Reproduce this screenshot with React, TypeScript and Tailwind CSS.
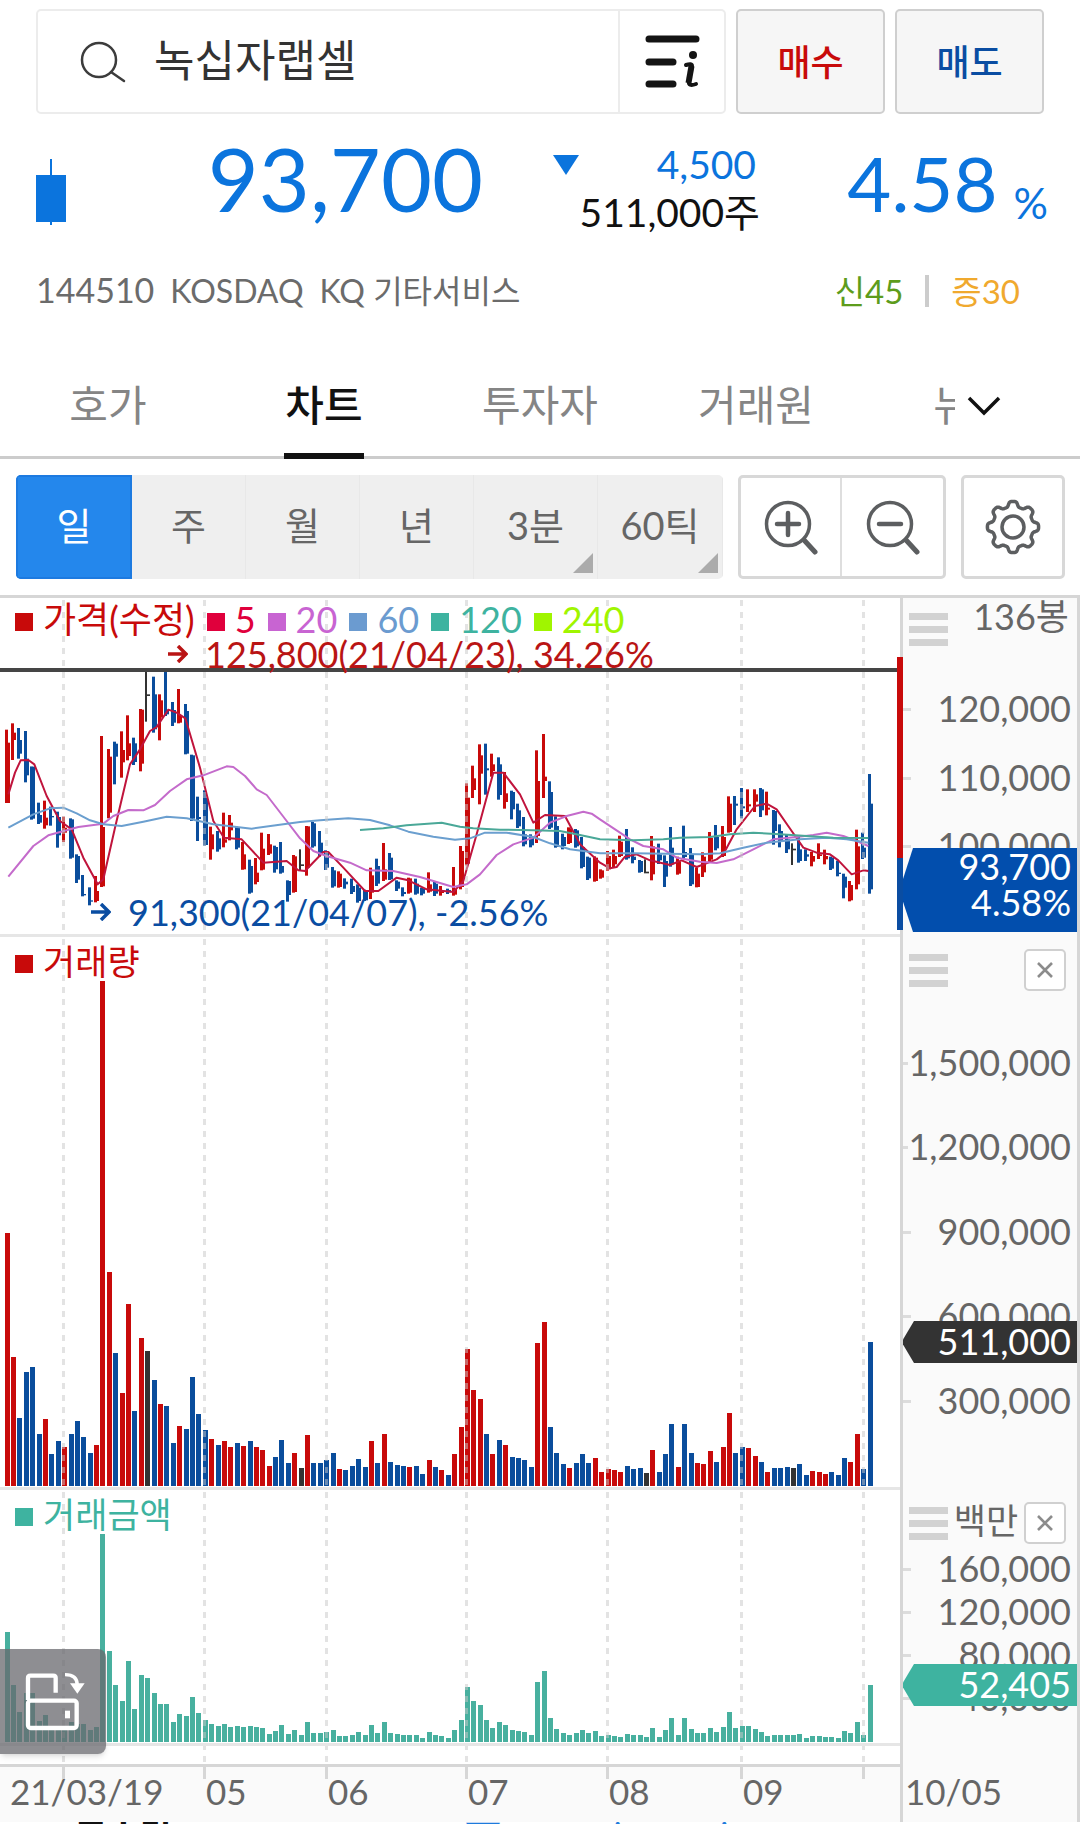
import type { ReactNode } from "react";

type Tone = "R" | "B" | "K";

const TONES: Record<Tone, string> = { R: "#c80a0a", B: "#0a4d9c", K: "#333333" };

// one letter per daily bar: up, down, flat
const BAR_TONES = (
  "RRBBBBRBBR" + "BBBBRRRBRR" + "BRKBRBBRBB" + "BBRBRRBRBR" + "RRBBBRKRBB" +
  "BBRBBBBRBR" + "BBBRBBRBRB" + "RRRRRBRBRB" + "BBBRRBBBRB" + "BBRRRRRBBB" +
  "KRBBBRBBRR" + "RBRRBBRRBR" + "BBBKBBRRRB" + "BBRRBB"
).split("") as Tone[];

const VOLUMES = [
  253, 129, 68, 114, 119, 52, 67, 32, 45, 39, 52, 65, 49, 33, 41, 505, 214, 133, 93, 182,
  75, 148, 135, 106, 82, 80, 43, 60, 57, 109, 72, 56, 47, 41, 45, 39, 43, 40, 45, 39,
  36, 20, 29, 46, 23, 33, 18, 51, 23, 23, 26, 33, 17, 16, 20, 27, 19, 45, 23, 52,
  24, 21, 20, 19, 20, 12, 26, 19, 16, 11, 32, 59, 137, 96, 87, 52, 32, 46, 41, 29,
  28, 26, 19, 143, 164, 59, 33, 22, 18, 23, 32, 23, 28, 14, 17, 16, 14, 20, 17, 18,
  13, 36, 14, 32, 62, 19, 62, 33, 23, 22, 35, 24, 39, 73, 33, 39, 38, 30, 24, 14,
  18, 18, 19, 18, 22, 11, 15, 14, 12, 14, 11, 28, 24, 52, 17, 144,
];

const AMOUNTS = [
  110, 57, 30, 49, 49, 21, 27, 13, 15, 14, 20, 18, 18, 12, 15, 208, 91, 57, 41, 81,
  33, 67, 64, 49, 38, 38, 20, 28, 26, 45, 29, 22, 18, 16, 18, 15, 16, 15, 16, 15,
  14, 8, 11, 17, 8, 12, 7, 20, 9, 9, 10, 12, 6, 6, 7, 10, 7, 17, 9, 20,
  9, 8, 7, 7, 7, 4, 10, 7, 6, 4, 12, 22, 55, 41, 37, 22, 14, 20, 17, 12,
  11, 10, 7, 60, 71, 24, 13, 9, 7, 9, 12, 9, 11, 6, 7, 6, 5, 8, 7, 7,
  5, 14, 5, 12, 24, 7, 24, 13, 9, 9, 14, 10, 15, 30, 14, 16, 16, 13, 10, 6,
  7, 7, 7, 7, 8, 4, 6, 6, 5, 5, 4, 11, 9, 20, 7, 57,
];

// high, low, body top, body bottom
const CANDLES = [
  [416, 636, 455, 636], [397, 507, 425, 447], [411, 503, 447, 488], [420, 574, 503, 553], [527, 686, 527, 683],
  [635, 699, 672, 695], [629, 713, 680, 703], [647, 704, 675, 679], [662, 770, 678, 733], [677, 753, 710, 725],
  [682, 803, 685, 800], [790, 876, 795, 866], [852, 916, 909, 913], [889, 943, 928, 932], [855, 934, 900, 930],
  [435, 888, 708, 886], [474, 682, 497, 665], [452, 580, 458, 497], [421, 560, 477, 514], [373, 508, 457, 495],
  [440, 522, 457, 513], [354, 541, 356, 518], [240, 392, 310, 315], [257, 425, 310, 415], [310, 448, 328, 380],
  [240, 375, 360, 370], [333, 405, 357, 395], [294, 397, 372, 395], [339, 490, 360, 488], [491, 690, 493, 683],
  [617, 750, 678, 684], [598, 764, 620, 762], [707, 806, 730, 775], [720, 782, 742, 775], [665, 769, 745, 755],
  [672, 748, 695, 718], [707, 775, 710, 770], [753, 836, 790, 835], [806, 908, 825, 905], [801, 880, 845, 873],
  [725, 838, 773, 836], [729, 792, 760, 788], [764, 845, 768, 835], [753, 848, 825, 845], [868, 932, 870, 912],
  [792, 905, 796, 903], [775, 840, 820, 825], [705, 854, 706, 830], [693, 770, 697, 766], [720, 797, 755, 790],
  [778, 837, 785, 830], [828, 890, 838, 886], [841, 890, 848, 888], [862, 893, 872, 880], [863, 909, 885, 903],
  [880, 935, 890, 930], [896, 930, 900, 928], [830, 924, 853, 905], [803, 885, 825, 878], [756, 870, 835, 866],
  [786, 867, 800, 865], [868, 900, 872, 893], [889, 916, 903, 909], [860, 908, 862, 905], [863, 911, 878, 908],
  [890, 913, 893, 908], [844, 905, 880, 902], [872, 915, 878, 908], [885, 914, 898, 906], [893, 909, 897, 904],
  [828, 914, 893, 911], [765, 895, 780, 888], [577, 823, 620, 818], [524, 621, 562, 597], [460, 640, 493, 548],
  [458, 611, 532, 538], [488, 557, 520, 540], [499, 626, 520, 612], [543, 653, 607, 633], [599, 685, 603, 655],
  [638, 711, 658, 706], [678, 766, 730, 760], [730, 769, 738, 763], [478, 756, 570, 735], [429, 621, 557, 570],
  [571, 714, 603, 710], [676, 770, 705, 768], [728, 775, 738, 765], [709, 759, 712, 756], [714, 770, 718, 766],
  [738, 832, 768, 828], [797, 867, 800, 862], [796, 872, 800, 870], [835, 863, 838, 860], [780, 839, 795, 835],
  [776, 829, 795, 820], [734, 798, 752, 795], [714, 806, 750, 802], [769, 817, 797, 807], [807, 845, 810, 843],
  [805, 846, 842, 847], [735, 868, 766, 850], [758, 819, 790, 808], [793, 888, 810, 857], [708, 827, 770, 820],
  [797, 851, 812, 848], [704, 803, 783, 798], [771, 885, 790, 880], [830, 889, 848, 888], [784, 858, 797, 844],
  [723, 812, 740, 806], [702, 778, 738, 772], [705, 798, 738, 795], [616, 725, 638, 723], [615, 702, 638, 644],
  [591, 682, 646, 652], [595, 663, 640, 646], [595, 663, 610, 632], [591, 678, 595, 658], [602, 673, 650, 656],
  [657, 761, 660, 720], [700, 769, 720, 750], [731, 786, 745, 775], [757, 822, 773, 778], [738, 815, 775, 810],
  [775, 810, 790, 797], [783, 826, 795, 812], [757, 804, 790, 795], [776, 820, 795, 805], [797, 837, 800, 833],
  [809, 856, 845, 849], [848, 922, 857, 890], [870, 931, 882, 928], [716, 895, 766, 880], [725, 804, 770, 800],
  [549, 908, 638, 895],
];

const AVERAGES = [
  {
    color: "#c0143c",
    points:
      "25,610 45,545 62,508 85,507 103,520 140,615 180,690 215,715 250,800 293,880 310,865 345,710 390,520 420,475 450,420 470,408 505,356 530,365 556,382 600,530 640,690 672,740 725,745 790,815 860,810 895,838 915,840 970,783 985,783 1030,830 1095,900 1135,900 1190,860 1225,868 1280,895 1360,903 1390,870 1430,730 1480,545 1510,545 1560,610 1600,695 1635,672 1695,675 1740,760 1800,815 1830,832 1850,828 1875,797 1910,790 1950,808 2010,822 2045,808 2090,828 2150,805 2170,790 2210,715 2265,645 2300,638 2330,655 2375,720 2410,770 2450,785 2490,790 2515,808 2555,850 2590,838 2605,840",
  },
  {
    color: "#c46bcb",
    points:
      "25,857 100,765 145,733 235,708 310,698 340,675 385,657 430,658 465,642 510,600 560,565 610,553 680,526 700,528 735,555 770,595 800,612 860,690 900,742 940,780 980,795 1050,815 1100,838 1180,840 1260,858 1360,888 1400,880 1440,850 1490,792 1540,760 1600,740 1650,695 1700,675 1750,662 1775,668 1800,685 1860,725 1890,745 1930,765 1990,775 2030,800 2100,812 2150,816 2200,805 2260,775 2320,745 2390,738 2440,732 2480,725 2530,735 2570,750 2605,765",
  },
  {
    color: "#6b9fcf",
    points:
      "25,710 100,670 150,652 190,650 230,667 270,688 310,700 365,705 430,692 500,677 560,682 640,700 755,713 850,700 900,693 960,688 1045,682 1110,687 1170,703 1225,722 1300,737 1365,746 1410,742 1455,725 1520,725 1600,738 1650,757 1710,775 1800,787 1900,787 2100,790 2160,787 2230,770 2300,755 2400,745 2480,740 2540,745 2605,755",
  },
  {
    color: "#4aa898",
    points:
      "1080,717 1150,712 1220,703 1325,695 1380,707 1420,712 1500,716 1600,718 1680,720 1740,732 1800,745 1900,748 1990,745 2040,740 2130,738 2190,730 2260,725 2340,730 2420,735 2500,740 2605,741",
  },
];

const MONTHS = [
  { x: 63, label: "" },
  { x: 204, label: "05" },
  { x: 326, label: "06" },
  { x: 466, label: "07" },
  { x: 607, label: "08" },
  { x: 741, label: "09" },
  { x: 863, label: "" },
];

const PLOT_WIDTH = 900;

const barX = (i: number) => Math.floor(5.1 + i * 6.393);

function MonthLines({ height }: { height: number }) {
  return (
    <>
      {MONTHS.map(({ x }) => (
        <line key={x} x1={x + 0.5} x2={x + 0.5} y1={2} y2={height} stroke="#c8c8c8" strokeOpacity="0.5" strokeWidth="3" strokeDasharray="6 6" />
      ))}
    </>
  );
}

function PriceChart() {
  return (
    <svg viewBox="0 0 900 336" preserveAspectRatio="none" className="block h-[336px] w-full">
      <g transform="translate(0 -7) scale(0.33333)">
        {CANDLES.map(([high, low, top, bottom], i) => {
          const x = barX(i) * 3;
          return (
            <g key={i} fill={TONES[BAR_TONES[i]]}>
              <rect x={x} y={high} width={BAR_TONES[i] === "K" ? 6 : 9} height={low - high} />
              <rect x={x} y={top} width="15" height={bottom - top} />
            </g>
          );
        })}
        {AVERAGES.map((line) => (
          <polyline key={line.color} points={line.points} fill="none" stroke={line.color} strokeWidth="6" strokeLinejoin="round" />
        ))}
      </g>
      <MonthLines height={336} />
      <rect x="0" y="70" width="900" height="4" fill="#454545" />
    </svg>
  );
}

function BarChart({ values, base, height, color }: { values: number[]; base: number; height: number; color?: string }) {
  return (
    <svg viewBox={`0 0 ${PLOT_WIDTH} ${height}`} preserveAspectRatio="none" className="block h-full w-full">
      {values.map((value, i) => (
        <rect key={i} x={barX(i)} y={base - value} width="5" height={value} fill={color ?? TONES[BAR_TONES[i]]} />
      ))}
      <MonthLines height={height} />
    </svg>
  );
}

function Legend({ color, children }: { color: string; children: ReactNode }) {
  return (
    <span className="flex items-center gap-[10px]" style={{ color }}>
      <span className="mt-[6px] size-[18px]" style={{ backgroundColor: color }} />
      {children}
    </span>
  );
}

function PanelHandle() {
  return (
    <button type="button" aria-label="패널 이동" className="flex h-[33px] w-[39px] flex-col justify-between">
      <span className="h-[7px] w-full bg-[#d2d2d2]" />
      <span className="h-[7px] w-full bg-[#d2d2d2]" />
      <span className="h-[7px] w-full bg-[#d2d2d2]" />
    </button>
  );
}

function CloseButton() {
  return (
    <button type="button" aria-label="닫기" className="flex size-[42px] items-center justify-center rounded-[5px] border-2 border-[#d0d0d0] bg-white">
      <svg viewBox="0 0 16 16" className="size-4" stroke="#8c8c8c" strokeWidth="2.6">
        <path d="M1 1 15 15M15 1 1 15" />
      </svg>
    </button>
  );
}

function Scale({ marks }: { marks: { y: number; label: string }[] }) {
  return (
    <>
      {marks.map(({ y, label }) => (
        <div key={label} className="absolute right-[6px] left-0 flex h-10 -translate-y-1/2 items-center justify-between" style={{ top: y }}>
          <span className="h-[3px] w-2 bg-[#dcdcdc]" />
          <span className="pb-[2px]">{label}</span>
        </div>
      ))}
    </>
  );
}

function ValueTag({ top, height, color, children }: { top: number; height: number; color: string; children: ReactNode }) {
  const double = height > 50;
  return (
    <div className="absolute right-0 left-0 text-right text-white" style={{ top, height }}>
      <svg viewBox="0 0 174 100" preserveAspectRatio="none" className="absolute inset-0 h-full w-full" fill={color}>
        <path d={double ? "M10 0H174V100H10L0 64V37Z" : "M11 0H174V100H11L0 56V44Z"} />
      </svg>
      <div className={`relative flex h-full flex-col justify-center pr-[6px] leading-9 ${double ? "pb-3" : "pb-[2px]"}`}>{children}</div>
    </div>
  );
}

const GEAR = Array.from({ length: 160 }, (_, i) => {
  const angle = (i / 160) * Math.PI * 2;
  const radius = 23 + 2.7 * Math.tanh(2 * Math.cos(angle * 8));
  return `${(28 + radius * Math.sin(angle)).toFixed(2)},${(28 - radius * Math.cos(angle)).toFixed(2)}`;
}).join(" ");

function ZoomIcon({ plus }: { plus?: boolean }) {
  return (
    <svg viewBox="0 0 56 56" className="size-14" fill="none" stroke="#5c5e60" strokeWidth="3.5" strokeLinecap="round">
      <circle cx="25" cy="25" r="21.5" />
      <path d="M41 41 52 53" strokeWidth="5" />
      <path d="M14 25H36" strokeWidth="4.5" />
      {plus && <path d="M25 14V36" strokeWidth="4.5" />}
    </svg>
  );
}

function Arrow() {
  return (
    <svg viewBox="0 0 20 18" className="h-[18px] w-5" fill="none" stroke="currentColor" strokeWidth="3.5">
      <path d="M0 9H18M10 1 18 9 10 17" />
    </svg>
  );
}

const TABS = ["호가", "차트", "투자자", "거래원", "뉴스"];

const PERIODS = [
  { label: "일", width: "w-[116px]", active: true },
  { label: "주", width: "w-[114px]" },
  { label: "월", width: "w-[114px]" },
  { label: "년", width: "w-[114px]" },
  { label: "3분", width: "w-[124px]", menu: true },
  { label: "60틱", width: "w-[125px]", menu: true },
];

function Header() {
  return (
    <header className="px-9 pt-[9px]">
      <div className="flex h-[105px] gap-[10px]">
        <form className="flex flex-1 rounded-[5px] border-2 border-[#ececec]">
          <label className="flex flex-1 items-center gap-7 pl-[42px]">
            <svg viewBox="0 0 46 42" className="h-[42px] w-[46px] shrink-0" fill="none" stroke="#3c3c3c" strokeWidth="2.5" strokeLinecap="round">
              <circle cx="19" cy="19" r="17" />
              <path d="M31 31 44 40" />
            </svg>
            <input aria-label="종목 검색" defaultValue="녹십자랩셀" className="w-full min-w-0 pb-1 text-[44px] text-[#333] outline-none" />
          </label>
          <button type="button" aria-label="종목 정보" className="flex w-[106px] items-center justify-center border-l-2 border-[#ececec]">
            <svg viewBox="0 0 56 54" className="h-[54px] w-14" fill="none" stroke="#141414" strokeWidth="7" strokeLinecap="round">
              <path d="M5 4H52M5 27H29M5 49H29" />
              <circle cx="49" cy="20" r="4" fill="#141414" stroke="none" />
              <path d="M42 30Q48 28 48 31L45 46Q44 52 52 49" strokeWidth="4" />
              <path d="M47.500 31 44.500 48" strokeWidth="6" strokeLinecap="butt" />
            </svg>
          </button>
        </form>
        <button type="button" className="w-[149px] rounded-[5px] border-2 border-[#cfcfcf] bg-[#f6f6f6] text-[36px] font-medium text-[#c80a0a]">매수</button>
        <button type="button" className="w-[149px] rounded-[5px] border-2 border-[#cfcfcf] bg-[#f6f6f6] text-[36px] font-medium text-[#0a4da2]">매도</button>
      </div>

      <div className="flex h-[106px] mt-4 items-start text-[#0b74dd]">
        <svg viewBox="0 0 30 66" className="mt-[29px] h-[66px] w-[30px]" fill="#0b74dd">
          <path d="M14 0h2v66h-2zM0 16h30v47H0z" />
        </svg>
        <div className="flex-1 text-right text-[88px] leading-[96px]">93,700</div>
        <svg viewBox="0 0 26 20" className="mt-[25px] ml-[70px] h-5 w-[26px]" fill="#0b74dd">
          <path d="M0 0H26L13 20Z" />
        </svg>
        <div className="mt-[10px] w-[181px] text-right text-[39px] leading-12">
          <div className="pr-1">4,500</div>
          <div className="-ml-10 text-[#111]">511,000주</div>
        </div>
        <div className="mt-[9px] -mr-1 flex w-[288px] items-end justify-end gap-4 leading-[88px]">
          <span className="text-[76px]">4.58</span>
          <span className="text-[43px] leading-12">%</span>
        </div>
      </div>

      <div className="flex items-center justify-between pt-[29px] text-[33px] leading-[50px]">
        <div className="flex items-baseline gap-4 text-[32px] text-[#6b6b6b]">
          <span className="text-[34px]">144510</span>
          <span>KOSDAQ</span>
          <span>KQ 기타서비스</span>
        </div>
        <div className="flex items-center gap-[22px] pr-6">
          <span className="text-[#5d9c1c]">신45</span>
          <span className="h-8 w-1 bg-[#ccc]" />
          <span className="text-[#f0a92e]">증30</span>
        </div>
      </div>
    </header>
  );
}

function Tabs() {
  return (
    <nav className="relative mt-10 grid h-[103px] grid-cols-5 border-b-[3px] border-[#ccc] text-[42px]">
      {TABS.map((tab) => (
        <a key={tab} href="#chart" className="flex justify-center">
          <span
            className={
              tab === "차트"
                ? "-mb-[3px] border-b-[6px] border-[#111] px-[1px] pt-[18px] font-medium text-[#111]"
                : "pt-[18px] text-[#858585]"
            }
          >
            {tab}
          </span>
        </a>
      ))}
      <button type="button" aria-label="더보기" className="absolute top-0 right-0 flex h-full w-[125px] items-center bg-white pl-3">
        <svg viewBox="0 0 34 20" className="h-5 w-[34px]" fill="none" stroke="#111" strokeWidth="3.5">
          <path d="M2 2 17 17 32 2" />
        </svg>
      </button>
    </nav>
  );
}

function Toolbar() {
  return (
    <div className="flex items-center justify-between py-4 pr-[15px] pl-4 text-[38px]">
      <div className="flex h-[104px] overflow-hidden rounded-[5px] bg-[#efefef]">
        {PERIODS.map(({ label, width, active, menu }) => (
          <button
            key={label}
            type="button"
            className={`relative flex items-center justify-center pb-1 ${width} ${
              active ? "border-2 border-[#1d7ae0] bg-[#2487ec] text-white" : "border-r border-[#e8e8e8] text-[#666]"
            }`}
          >
            {label}
            {menu && (
              <svg viewBox="0 0 20 20" className="absolute right-1 bottom-[6px] size-5" fill="#ababab">
                <path d="M20 0V20H0Z" />
              </svg>
            )}
          </button>
        ))}
      </div>
      <div className="flex h-[104px] rounded-[5px] border-[3px] border-[#d8d8d8]">
        <button type="button" aria-label="확대" className="flex w-[101px] items-center justify-center border-r-2 border-[#dedede]">
          <ZoomIcon plus />
        </button>
        <button type="button" aria-label="축소" className="flex w-[101px] items-center justify-center">
          <ZoomIcon />
        </button>
      </div>
      <button type="button" aria-label="설정" className="flex h-[104px] w-[104px] items-center justify-center rounded-[5px] border-[3px] border-[#d8d8d8]">
        <svg viewBox="0 0 56 56" className="size-14" fill="none" stroke="#5c5e60" strokeWidth="3.5">
          <polygon points={GEAR} strokeLinejoin="round" />
          <circle cx="28" cy="28" r="11" />
        </svg>
      </button>
    </div>
  );
}

export default function App() {
  return (
    <div className="w-full overflow-hidden bg-white font-['Lato','Noto_Sans_CJK_KR',sans-serif]">
      <Header />
      <Tabs />
      <Toolbar />

      <main id="chart" className="border-t-[3px] border-[#d6d6d6] text-[36px] leading-10 text-[#666]">
        {/* price */}
        <section className="flex h-[339px]">
          <div className="relative flex-1 border-b-[3px] border-[#e6e6e6]">
            <PriceChart />
            <div className="absolute top-0 left-[15px] flex h-[42px] items-center gap-3">
              <Legend color="#c80a0a">가격(수정)</Legend>
              <Legend color="#e0003c">5</Legend>
              <Legend color="#c864d2">20</Legend>
              <Legend color="#6b9bd0">60</Legend>
              <Legend color="#3eb3a0">120</Legend>
              <Legend color="#a0f500">240</Legend>
            </div>
            <div className="absolute top-9 left-[168px] flex items-center gap-[17px] text-[#b91414]">
              <Arrow />
              125,800(21/04/23), 34.26%
            </div>
            <div className="absolute top-[294px] left-[91px] flex items-center gap-[17px] text-[#0a4da2]">
              <Arrow />
              91,300(21/04/07), -2.56%
            </div>
          </div>
          <div className="relative w-[180px] border-r-[3px] border-l-[3px] border-[#d6d6d6] bg-[#fafafa]">
            <Scale marks={[{ y: 111, label: "120,000" }, { y: 180, label: "110,000" }, { y: 248, label: "100,000" }]} />
            <div className="flex items-start justify-between pr-2 pl-[6px]">
              <div className="pt-[15px]">
                <PanelHandle />
              </div>
              <span className="leading-9">136봉</span>
            </div>
            <div className="absolute top-[59px] -left-[6px] h-[201px] w-[6px] bg-[#c80a0a]" />
            <div className="absolute top-[260px] -left-[6px] h-[72px] w-[6px] bg-[#0a4da2]" />
            <ValueTag top={250} height={84} color="#024ead">
              <span>93,700</span>
              <span>4.58%</span>
            </ValueTag>
          </div>
        </section>

        {/* volume */}
        <section className="flex h-[553px]">
          <div className="relative flex-1 border-b-[3px] border-[#e6e6e6]">
            <BarChart values={VOLUMES} base={549} height={550} />
            <div className="absolute top-1 left-[15px] text-[35px]">
              <Legend color="#c80a0a">거래량</Legend>
            </div>
          </div>
          <div className="relative w-[180px] border-r-[3px] border-l-[3px] border-[#d6d6d6] bg-[#fafafa]">
            <Scale
              marks={[
                { y: 126, label: "1,500,000" },
                { y: 210, label: "1,200,000" },
                { y: 295, label: "900,000" },
                { y: 379, label: "600,000" },
                { y: 464, label: "300,000" },
              ]}
            />
            <div className="flex items-center justify-between pt-3 pr-[11px] pl-[6px]">
              <PanelHandle />
              <CloseButton />
            </div>
            <ValueTag top={384} height={42} color="#333333">
              <span>511,000</span>
            </ValueTag>
          </div>
        </section>

        {/* traded amount */}
        <section className="flex h-[277px]">
          <div className="relative flex-1 border-b-[3px] border-[#d6d6d6]">
            <BarChart values={AMOUNTS} base={252} height={274} color="#48b09f" />
            <div className="absolute bottom-[18px] h-[3px] w-full bg-[#e6e6e6]" />
            <div className="absolute top-1 left-[15px] text-[35px]">
              <Legend color="#3eb3a0">거래금액</Legend>
            </div>
            <button type="button" aria-label="가로 화면" className="absolute bottom-[10px] left-0 h-[105px] w-[106px] rounded-r-lg bg-[#68686e]/75 shadow-md">
              <svg viewBox="0 503 318 315" className="h-full w-full" fill="none" stroke="#fff" strokeWidth="13">
                <path d="M84 656V590Q84 583 91 583H160Q167 583 167 590V634" />
                <rect x="84" y="658" width="146" height="82" rx="8" />
                <path d="M195 580Q232 580 232 612" strokeWidth="10" />
                <path d="M210 606H254L232 637Z" fill="#fff" stroke="none" />
                <rect x="195" y="688" width="15" height="23" fill="#fff" stroke="none" />
              </svg>
            </button>
          </div>
          <div className="relative w-[180px] border-r-[3px] border-l-[3px] border-[#d6d6d6] bg-[#fafafa]">
            <Scale
              marks={[
                { y: 79, label: "160,000" },
                { y: 122, label: "120,000" },
                { y: 165, label: "80,000" },
                { y: 208, label: "40,000" },
              ]}
            />
            <div className="flex items-center justify-between pt-3 pr-[11px] pl-[6px]">
              <PanelHandle />
              <span className="pb-[6px] text-[35px] leading-9">백만</span>
              <CloseButton />
            </div>
            <ValueTag top={174} height={42} color="#3eb3a0">
              <span>52,405</span>
            </ValueTag>
          </div>
        </section>

        {/* dates */}
        <section className="flex h-[55px] bg-[#fafafa] text-[35px]">
          <div className="relative flex-1">
            {MONTHS.map(({ x, label }) => (
              <div key={x} className="absolute top-0 flex" style={{ left: `${((x - 1) / PLOT_WIDTH) * 100}%` }}>
                <span className="h-3 w-[3px] bg-[#d6d6d6]" />
                <span className="pt-1">{label}</span>
              </div>
            ))}
            <span className="absolute top-1 left-[10px]">21/03/19</span>
          </div>
          <div className="w-[180px] border-r-[3px] border-l-[3px] border-[#d6d6d6] pt-1 pl-[2px]">10/05</div>
        </section>
      </main>

      <footer className="flex h-[3px] items-start gap-[170px] overflow-hidden pl-[74px] text-[36px] leading-7">
        <b className="text-[#111]">코스닥</b>
        <span className="font-bold text-[#1e7bdc]">955.37 ▼ 27.83 (2.83%)</span>
      </footer>
    </div>
  );
}
